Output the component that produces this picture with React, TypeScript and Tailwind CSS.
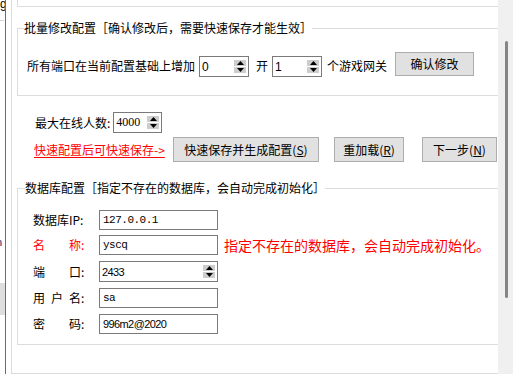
import React from 'react';

// little up/down pair used by every numeric box
function Arrows() {
  return (
    <div className="flex flex-col gap-px">
      <div className="flex h-[6px] w-[12px] items-center justify-center bg-[#cdcdcd]">
        <svg width="7" height="4" viewBox="0 0 7 4">
          <path d="M3.5 0L7 4H0z" fill="#000" />
        </svg>
      </div>
      <div className="flex h-[6px] w-[12px] items-center justify-center bg-[#cdcdcd]">
        <svg width="7" height="4" viewBox="0 0 7 4">
          <path d="M0 0h7L3.5 4z" fill="#000" />
        </svg>
      </div>
    </div>
  );
}

interface SpinBoxProps {
  value: string;
  className?: string;
  textClass?: string;
}

const SpinBox: React.FC<SpinBoxProps> = ({ value, className = '', textClass = '' }) => (
  <div className={`flex h-[21px] shrink-0 items-center border border-[#7a7a7a] bg-white pr-[2px] ${className}`}>
    <input
      readOnly
      value={value}
      className={`h-full min-w-0 flex-1 bg-transparent pl-[2px] text-black outline-none ${textClass}`}
    />
    <Arrows />
  </div>
);

const Btn: React.FC<{ className?: string; children: React.ReactNode }> = ({ className = '', children }) => (
  <button className={`flex shrink-0 items-center justify-center border border-[#adadad] bg-[#e1e1e1] text-[12px] text-black ${className}`}>
    {children}
  </button>
);

interface DbRowProps {
  label: string;
  value: string;
  red?: boolean;
  spin?: boolean;
  mono?: boolean;
  className?: string;
  note?: string;
}

const DbRow: React.FC<DbRowProps> = ({ label, value, red, spin, mono, className = '', note }) => {
  const font = mono
    ? "font-['Liberation_Mono',monospace] text-[11px] tracking-[-0.5px]"
    : "font-['Liberation_Sans',sans-serif] text-[11px] tracking-[-0.6px]";
  return (
    <div className={`flex items-center ${className}`}>
      <span className={`w-[66px] shrink-0 whitespace-pre ${red ? 'text-[#ff0000]' : 'text-black'}`}>{label}</span>
      {spin ? (
        <SpinBox value={value} className="w-[119px]" textClass={`pl-[2px] ${font}`} />
      ) : (
        <input
          readOnly
          value={value}
          className={`h-[20px] w-[119px] shrink-0 border border-[#7a7a7a] bg-white pl-[3px] text-black outline-none ${font}`}
        />
      )}
      {note && <span className="ml-[6px] whitespace-nowrap text-[14px] text-[#ff0000]">{note}</span>}
    </div>
  );
};

export default function App() {
  return (
    <div className="flex h-[374px] w-[513px] overflow-hidden bg-white font-['Noto_Sans_CJK_SC','Noto_Sans',sans-serif] text-[12px] leading-[16px] text-black">
      {/* edge of the window behind */}
      <div className="flex w-[6px] shrink-0 flex-col overflow-hidden border-r border-[#6d6d6d]">
        <span className="-mt-[3px] h-[14px] font-['Liberation_Sans',sans-serif] text-[12px] leading-[14px]">g</span>
        <div className="mt-[9px] h-px w-[4px] bg-[#d4d4d4]" />
        <span className="-ml-[4px] mt-[217px] h-[8px] font-['Liberation_Sans',sans-serif] text-[11px] leading-[8px] text-[#22226a]">n</span>
        <div className="mt-[37px] h-[32px] w-[5px] bg-[#dedede]" />
      </div>

      {/* dialog content */}
      <div className="flex min-w-0 flex-1 flex-col pl-[5px]">
        <div className="flex h-full flex-col border-b border-l border-[#dcdcdc]">
          <div className="ml-[5px] h-[7px] shrink-0 border-b border-l border-[#dcdcdc]" />

          <fieldset className="ml-[5px] mt-[13px] border border-r-0 border-[#dcdcdc]">
            <legend className="ml-[6px] whitespace-nowrap leading-[16px]">批量修改配置［确认修改后，需要快速保存才能生效］</legend>
            <div className="flex items-start pb-[18px] pl-[9px] pt-[16px]">
              <span className="mt-[6px] whitespace-nowrap">所有端口在当前配置基础上增加</span>
              <SpinBox value="0" className="ml-[4px] mt-[4px] w-[50px]" textClass="font-['Liberation_Sans',sans-serif] text-[12px]" />
              <span className="ml-[7px] mt-[6px]">开</span>
              <SpinBox value="1" className="ml-[4px] mt-[4px] w-[50px]" textClass="font-['Liberation_Sans',sans-serif] text-[12px]" />
              <span className="ml-[5px] mt-[6px] whitespace-nowrap">个游戏网关</span>
              <Btn className="ml-[8px] h-[24px] w-[79px]">确认修改</Btn>
            </div>
          </fieldset>

          <div className="mt-[16px] flex items-center pl-[23px]">
            <span className="whitespace-nowrap">最大在线人数:</span>
            <SpinBox value="4000" className="ml-[3px] w-[49px]" textClass="font-['Liberation_Serif',serif] text-[12px]" />
          </div>

          <div className="mt-[4px] flex items-center pl-[22px]">
            <span className="w-[132px] shrink-0 whitespace-nowrap text-[#ff0000] underline underline-offset-2">快速配置后可快速保存-&gt;</span>
            <Btn className="ml-[7px] h-[25px] w-[146px]">
              快速保存并生成配置(<u>S</u>)
            </Btn>
            <Btn className="ml-[15px] h-[25px] w-[70px]">
              重加载(<u>R</u>)
            </Btn>
            <Btn className="ml-[18px] h-[25px] w-[75px]">
              下一步(<u>N</u>)
            </Btn>
          </div>

          <fieldset className="ml-[5px] mt-[18px] border border-r-0 border-[#dcdcdc]">
            <legend className="ml-[7px] whitespace-nowrap leading-[16px]">数据库配置［指定不存在的数据库，会自动完成初始化］</legend>
            <div className="flex flex-col pb-[10px] pl-[15px] pt-[14px]">
              <DbRow label="数据库IP:" value="127.0.0.1" mono />
              <DbRow
                label={'名\u3000\u3000称:'}
                value="yscq"
                mono
                red
                className="mt-[5px]"
                note="指定不存在的数据库，会自动完成初始化。"
              />
              <DbRow label={'端\u3000\u3000口:'} value="2433" spin className="mt-[6px]" />
              <DbRow label={'用\u2002户\u2002名:'} value="sa" mono className="mt-[6px]" />
              <DbRow label={'密\u3000\u3000码:'} value="996m2@2020" className="mt-[6px]" />
            </div>
          </fieldset>
        </div>
      </div>

      {/* scrollbar */}
      <div className="w-[15px] shrink-0 bg-[#f0f0f0] pl-[7px] pt-[41px]">
        <div className="h-[257px] w-[3px] rounded-full bg-[#858585]" />
      </div>
    </div>
  );
}
